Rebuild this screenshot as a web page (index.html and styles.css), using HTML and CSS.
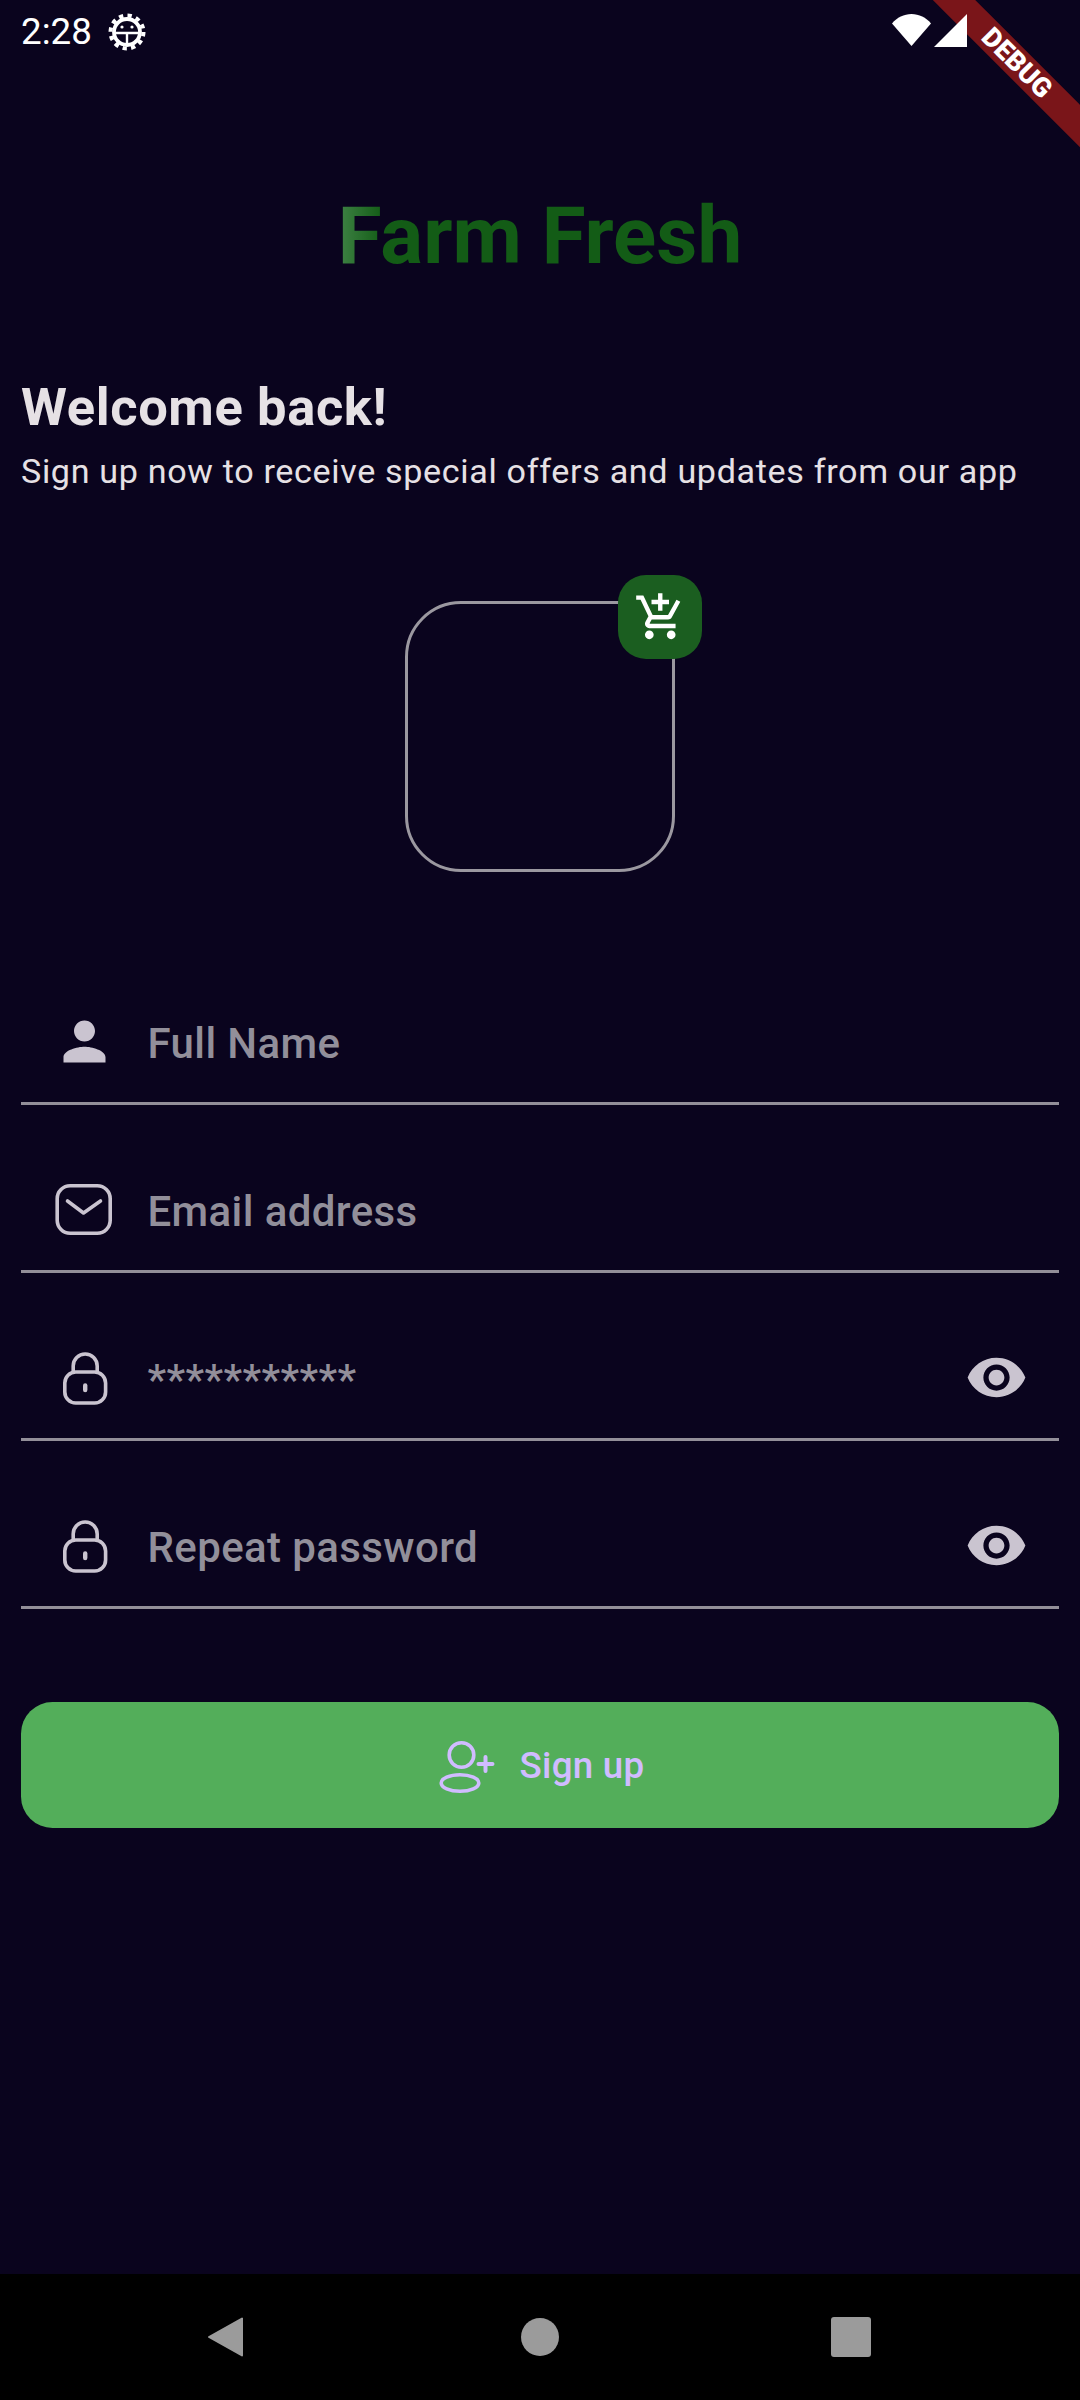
FILE: index.html
```html
<!DOCTYPE html>
<html lang="en">
<head>
<meta charset="UTF-8"/>
<meta name="viewport" content="width=device-width,initial-scale=1.0"/>
<title>Farm Fresh</title>
<link rel="stylesheet" href="styles.css">
</head>
<body>
<div class="screen">

  <!-- status bar -->
  <div class="status">
    <span class="time">2:28</span>
    <svg class="gear" viewBox="0 0 38 38" width="38" height="38">
      <circle cx="19" cy="19" r="16.5" fill="none" stroke="#fff" stroke-width="4" stroke-dasharray="4.3 4.34"/>
      <circle cx="19" cy="19" r="13" fill="none" stroke="#fff" stroke-width="3.800"/>
      <path d="M7 20h24M19 20v11" fill="none" stroke="#fff" stroke-width="2.400"/>
      <circle cx="14" cy="14" r="1.600" fill="#fff"/>
      <circle cx="24" cy="14" r="1.600" fill="#fff"/>
    </svg>
    <span class="status-right">
      <svg viewBox="0 0 39 32" width="39" height="32"><path d="M0 9.500C5 3.500 12 0 19.500 0S34 3.500 39 9.500L19.500 32Z" fill="#fff"/></svg>
      <svg viewBox="0 0 33 33" width="33" height="33"><path d="M33 0V33H0Z" fill="#fff"/></svg>
    </span>
  </div>
  <div class="ribbon"><span>DEBUG</span></div>

  <main class="content">
    <div class="brand-row"><h1 class="brand">Farm Fresh</h1></div>
    <h2 class="welcome">Welcome back!</h2>
    <p class="lead">Sign up now to receive special offers and updates from our app</p>

    <div class="avatar-wrap">
      <div class="avatar">
        <div class="badge">
          <svg viewBox="0 0 24 24" width="52.500" height="52.500"><path fill="#fff" d="M11 9h2V6h3V4h-3V1h-2v3H8v2h3v3zm-4 9c-1.100 0-1.990.9-1.990 2S5.900 22 7 22s2-.9 2-2-.9-2-2-2zm10 0c-1.100 0-1.990.9-1.990 2s.89 2 1.990 2 2-.9 2-2-.9-2-2-2zm-9.830-3.250l.03-.12.9-1.630h7.450c.75 0 1.410-.41 1.750-1.030l3.860-7.010L19.420 4h-.01l-1.100 2-2.760 5H8.530l-.13-.27L6.160 6l-.95-2-.94-2H1v2h2l3.600 7.590-1.350 2.450c-.16.28-.25.61-.25.96 0 1.100.9 2 2 2h12v-2H7.420c-.13 0-.25-.11-.25-.25z"/></svg>
        </div>
      </div>
    </div>

    <form class="fields">
      <label class="field">
        <svg class="ico" viewBox="0 0 24 24"><path fill="#cac4d0" d="M12 12c2.210 0 4-1.790 4-4s-1.790-4-4-4-4 1.790-4 4 1.790 4 4 4zm0 2c-2.670 0-8 1.340-8 4v2h16v-2c0-2.660-5.330-4-8-4z"/></svg>
        <span class="hint">Full Name</span>
      </label>
      <label class="field">
        <svg class="ico" viewBox="0 0 63 63"><rect x="4.200" y="7.700" width="53" height="47.600" rx="13" fill="none" stroke="#cac4d0" stroke-width="3.600"/><path d="M14.500 23l16 12 17-12" fill="none" stroke="#cac4d0" stroke-width="3.600" stroke-linecap="round" stroke-linejoin="round"/></svg>
        <span class="hint">Email address</span>
      </label>
      <label class="field">
        <svg class="ico" viewBox="0 0 63 63"><use href="#lock"/></svg>
        <span class="hint">***********</span>
        <svg class="ico eye" viewBox="0 0 24 24"><use href="#eye"/></svg>
      </label>
      <label class="field">
        <svg class="ico" viewBox="0 0 63 63"><use href="#lock"/></svg>
        <span class="hint">Repeat password</span>
        <svg class="ico eye" viewBox="0 0 24 24"><use href="#eye"/></svg>
      </label>
    </form>

    <button class="submit" type="button">
      <svg viewBox="0 0 63 63" width="63" height="63" fill="none" stroke="#d0bcff" stroke-width="3.600">
        <circle cx="25.500" cy="21" r="12.300"/>
        <ellipse cx="24" cy="49" rx="18.800" ry="8.300"/>
        <path d="M42.500 30h14M49.500 23v14" stroke-width="4" stroke-linecap="round"/>
      </svg>
      <span>Sign up</span>
    </button>
  </main>

  <!-- system nav -->
  <nav class="sysnav">
    <svg viewBox="0 0 42 42" width="42" height="42"><path d="M35 2.500V39.500L2 21Z" fill="#9b9b9b" stroke="#9b9b9b" stroke-width="2" stroke-linejoin="round"/></svg>
    <span class="sys-home"></span>
    <span class="sys-recent"></span>
  </nav>
</div>

<svg class="defs" width="0" height="0">
  <defs>
    <g id="lock" fill="none" stroke="#cac4d0" stroke-width="3.600">
      <rect x="11.800" y="26" width="40.800" height="31" rx="11"/>
      <path d="M20.200 26v-6a12 12 0 0 1 24 0v6"/>
      <path d="M32.200 39.500v4.500" stroke-width="4.400" stroke-linecap="round"/>
    </g>
    <path id="eye" fill="#cac4d0" d="M12 4.500C7 4.500 2.730 7.610 1 12c1.730 4.390 6 7.500 11 7.500s9.270-3.110 11-7.500c-1.730-4.390-6-7.500-11-7.500zM12 17c-2.760 0-5-2.240-5-5s2.240-5 5-5 5 2.240 5 5-2.240 5-5 5zm0-8c-1.660 0-3 1.340-3 3s1.340 3 3 3 3-1.340 3-3-1.340-3-3-3z"/>
  </defs>
</svg>
</body>
</html>
```

FILE: styles.css
```css
*{margin:0;padding:0;box-sizing:border-box}
body{background:#0a041e;color:#e6e1e5;font-family:Roboto,"Noto Sans",sans-serif;overflow:hidden}
.defs{position:absolute}

.screen{width:1080px;height:2400px;display:flex;flex-direction:column;position:relative;overflow:hidden}

/* ---------- status bar ---------- */
.status{height:63px;flex:none;display:flex;align-items:center;padding:0 113px 0 21px;color:#fff;position:relative;z-index:1}
.time{font-size:36.75px;line-height:63px}
.gear{margin-left:16px}
.status-right{margin:0 0 2px auto;display:flex;align-items:flex-start;gap:3px;height:33px}

/* ---------- debug ribbon ---------- */
.ribbon{
  position:absolute;top:48px;right:-67px;width:260px;height:30px;
  background:#7a1519;transform:rotate(45deg);
  display:flex;align-items:center;justify-content:center
}
.ribbon span{color:#fff;font-size:27px;font-weight:900;line-height:30px}

/* ---------- content ---------- */
.content{flex:1;padding:0 21px;display:flex;flex-direction:column}
.brand-row{margin-top:127.5px;display:flex;justify-content:center}
.brand{
  font-size:80px;font-weight:700;line-height:90px;color:transparent;
  background:linear-gradient(90deg,#3b7f41 1%,#135c16 11%);
  -webkit-background-clip:text;background-clip:text
}
.welcome{margin-top:95.5px;font-size:52.5px;font-weight:700;letter-spacing:.6px;line-height:62px}
.lead{margin-top:11px;font-size:34.125px;font-weight:400;letter-spacing:.656px;line-height:44px}

.avatar-wrap{margin-top:108px;display:flex;justify-content:center}
.avatar{width:270px;height:271px;border:3px solid #9b98a0;border-radius:56px;position:relative}
.badge{
  position:absolute;top:-29px;right:-30px;width:84px;height:84px;border-radius:28px;
  background:#1b5e20;display:flex;align-items:center;justify-content:center
}

/* ---------- fields ---------- */
.fields{margin-top:65px;display:flex;flex-direction:column}
.field{
  height:168px;display:flex;align-items:center;padding:44px 31.5px 0;
  border-bottom:3px solid #938f99
}
.ico{width:63px;height:63px;flex:none}
.hint{margin:3px 0 0 32px;font-size:42px;font-weight:500;letter-spacing:.39px;color:#928f9a}
.eye{margin-left:auto}

/* ---------- button ---------- */
.submit{
  margin-top:93px;height:126px;border:none;border-radius:31.5px;background:#53ae5a;
  display:flex;align-items:center;justify-content:center;gap:21px;
  color:#d0bcff;font-family:inherit;font-size:36.75px;font-weight:500;letter-spacing:.26px
}

/* ---------- system nav ---------- */
.sysnav{height:126px;flex:none;background:#000;display:flex;align-items:center;justify-content:space-between;padding:0 209px 0 207px}
.sys-home{width:38px;height:38px;border-radius:50%;background:#9b9b9b}
.sys-recent{width:40px;height:40px;border-radius:3px;background:#9b9b9b}
```
